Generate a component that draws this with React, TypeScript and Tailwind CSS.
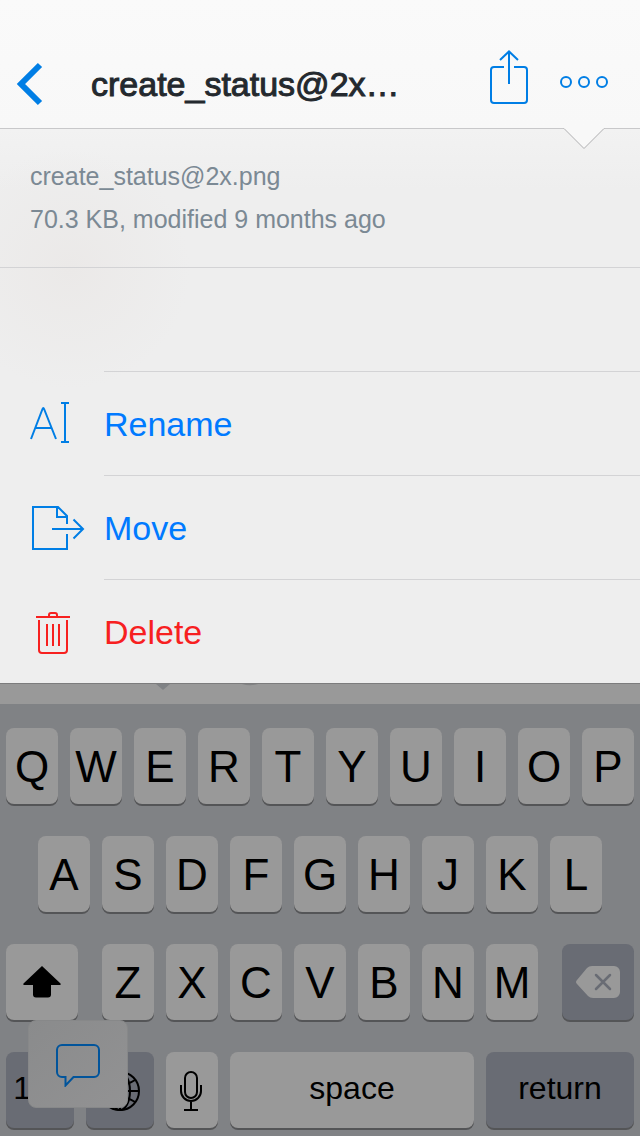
import type { ReactNode } from "react";

const title = "create_status@2x…";

function BackIcon() {
  return (
    <svg width="28" height="44" viewBox="0 0 28 44" fill="none" stroke="#007ee5" strokeWidth="6" aria-hidden="true">
      <path d="M24 3 5 22 24 41" />
    </svg>
  );
}

function ShareIcon() {
  return (
    <svg width="40" height="56" viewBox="0 0 40 56" fill="none" stroke="#007ee5" strokeWidth="2" aria-hidden="true">
      <path d="M15 17H5a3 3 0 0 0-3 3v30a3 3 0 0 0 3 3h30a3 3 0 0 0 3-3V20a3 3 0 0 0-3-3H25" />
      <path d="M20 34V1.500M11 10l9-8.500 9 8.500" />
    </svg>
  );
}

function MoreIcon() {
  return (
    <svg width="50" height="14" viewBox="0 0 50 14" fill="none" stroke="#007ee5" strokeWidth="2" aria-hidden="true">
      <circle cx="7" cy="7" r="5" />
      <circle cx="25" cy="7" r="5" />
      <circle cx="43" cy="7" r="5" />
    </svg>
  );
}

function RenameIcon() {
  return (
    <svg width="56" height="48" viewBox="0 0 56 48" fill="none" stroke="#007ee5" strokeWidth="2" aria-hidden="true">
      <path d="M1 39 12.500 9q.8-2 1.600 0L26 39M5.500 28H21.500" />
      <path d="M31 3h8M31 42h8M35 3v39" />
    </svg>
  );
}

function MoveIcon() {
  return (
    <svg width="56" height="48" viewBox="0 0 56 48" fill="none" stroke="#007ee5" strokeWidth="2" aria-hidden="true">
      <path d="M37 20V12L28 3H3v42h34V30M27 3v10h10" />
      <path d="M22 25h31M43.500 15.500 53 25l-9.500 9.500" />
    </svg>
  );
}

function TrashIcon() {
  return (
    <svg width="56" height="48" viewBox="0 0 56 48" fill="none" stroke="#f7201f" strokeWidth="2" aria-hidden="true">
      <path d="M6 9h34M19 9V7a2 2 0 0 1 2-2h4a2 2 0 0 1 2 2v2" />
      <path d="M9 12v30a3 3 0 0 0 3 3h22a3 3 0 0 0 3-3V12M17 16v22M23 16v22M29 16v22" />
    </svg>
  );
}

function ShiftIcon() {
  return (
    <svg width="38" height="32" viewBox="0 0 38 32" aria-hidden="true">
      <path d="M19 0 37.500 17.500q1 1.500-1 1.500H28v9.500a3 3 0 0 1-3 3H13a3 3 0 0 1-3-3V19H1.500q-2 0-1-1.500Z" />
    </svg>
  );
}

function DeleteIcon() {
  return (
    <svg width="44" height="32" viewBox="0 0 44 32" aria-hidden="true">
      <path d="M16 0h22a6 6 0 0 1 6 6v20a6 6 0 0 1-6 6H17q-3 0-5-2L1 18q-2-2 0-4L11 2q2-2 5-2Z" fill="#999" />
      <path d="m20 9 14 14M34 9 20 23" stroke="#696c74" strokeWidth="2.500" strokeLinecap="round" />
    </svg>
  );
}

function GlobeIcon() {
  return (
    <svg width="42" height="44" viewBox="0 0 42 44" fill="none" stroke="#000" strokeWidth="2" aria-hidden="true">
      <circle cx="21" cy="23" r="19" />
      <ellipse cx="21" cy="23" rx="10" ry="19" />
      <path d="M21 4v38M2 23h38M6 12q15 10 30 0M6 34q15-10 30 0" />
    </svg>
  );
}

function MicIcon() {
  return (
    <svg width="24" height="42" viewBox="0 0 24 42" fill="none" stroke="#000" strokeWidth="2" aria-hidden="true">
      <rect x="5" y="3" width="12" height="26" rx="6" />
      <path d="M1 16v6a10 10 0 0 0 20 0v-6M11 32v9M4 41h14" />
    </svg>
  );
}

function ChatIcon() {
  return (
    <svg width="46" height="46" viewBox="0 0 46 46" fill="none" stroke="#01549b" strokeWidth="2" aria-hidden="true">
      <path d="M7 4h32a5 5 0 0 1 5 5v22a5 5 0 0 1-5 5H18.500L10.500 44.500V36H7a5 5 0 0 1-5-5V9a5 5 0 0 1 5-5Z" />
    </svg>
  );
}

function Action({ icon, label, danger = false, last = false }: { icon: ReactNode; label: string; danger?: boolean; last?: boolean }) {
  return (
    <li>
      <button
        type="button"
        className={`flex w-full items-center gap-[18px] pl-[30px] text-left ${last ? "h-[103px]" : "h-[104px]"}`}
      >
        <span className="w-14 shrink-0">{icon}</span>
        <span
          className={`flex h-full flex-1 items-center text-[34px] leading-10 ${danger ? "text-[#f7201f]" : "text-[#007aff]"} ${last ? "" : "border-b border-[#d3d3d5]"}`}
        >
          {label}
        </span>
      </button>
    </li>
  );
}

function Key({ children, dark = false, small = false, label }: { children: ReactNode; dark?: boolean; small?: boolean; label?: string }) {
  return (
    <button
      type="button"
      aria-label={label}
      className={`flex h-[76px] min-w-0 flex-1 items-center justify-center rounded-lg shadow-[0_2px_0_#545557] ${dark ? "bg-[#696c74]" : "bg-[#999999]"} ${small ? "pb-1 text-[32px]" : "text-[44px]"} leading-none text-black`}
    >
      {children}
    </button>
  );
}

function Letters({ keys }: { keys: string }) {
  return (
    <div className="flex gap-3">
      {keys.split("").map((k) => (
        <Key key={k}>
          <span className="pt-0.5">{k}</span>
        </Key>
      ))}
    </div>
  );
}

export default function App() {
  return (
    <div className="flex min-h-screen flex-col bg-[#808285] font-['Liberation_Sans',Arial,sans-serif]">
      <header className="relative flex h-[129px] items-center border-b border-[#c8c8ca] bg-linear-to-b from-[#fafafa] to-[#f8f8f8] pt-[40px] pr-[31px] pl-4">
        <button type="button" aria-label="Back" className="w-[75px] shrink-0">
          <BackIcon />
        </button>
        <h1 className="min-w-0 flex-1 truncate text-[34px] leading-10 text-[#24292e] [-webkit-text-stroke:1px_#24292e]">{title}</h1>
        <div className="flex shrink-0 items-center gap-[30px]">
          <button type="button" aria-label="Share" className="pb-3">
            <ShareIcon />
          </button>
          <button type="button" aria-label="More" className="pb-1">
            <MoreIcon />
          </button>
        </div>
        <svg className="absolute top-[127px] right-[35px]" width="42" height="23" viewBox="0 0 42 23" aria-hidden="true">
          <path d="M1 0v1.500l20 20 20-20V0Z" fill="#f8f8f8" />
          <path d="m1 1.500 20 20 20-20" fill="none" stroke="#b0b0b2" />
        </svg>
      </header>

      <main className="border-b border-[#7c7c7d] bg-[#eeeeee] bg-[radial-gradient(circle_at_70px_140px,#ebe9e8_0,#eeeeee00_120px),linear-gradient(to_bottom,#f2f2f2,#eeeeee_60px)]">
        <section className="border-b border-[#d3d3d5] px-[30px] pt-[26px] pb-[26px] text-[25px] leading-[43px] text-[#7b8994]">
          <p>create_status@2x.png</p>
          <p>70.3 KB, modified 9 months ago</p>
        </section>
        <div className="ml-[104px] h-[104px] border-b border-[#d3d3d5]" />
        <ul>
          <Action icon={<RenameIcon />} label="Rename" />
          <Action icon={<MoveIcon />} label="Move" />
          <Action icon={<TrashIcon />} label="Delete" danger last />
        </ul>
      </main>

      <div className="h-5 bg-[#999999]">
        <svg width="360" height="8" viewBox="0 0 360 8" aria-hidden="true">
          <path d="M156 0h14l-7 6Z" fill="#808285" />
          <path d="M242 0h16q-8 2.500-16 0Z" fill="#818283" />
        </svg>
      </div>

      <section aria-label="Keyboard" className="relative flex flex-1 flex-col gap-8 px-[6px] pt-6 pb-2">
        <Letters keys="QWERTYUIOP" />
        <div className="px-8">
          <Letters keys="ASDFGHJKL" />
        </div>
        <div className="grid grid-cols-[72fr_436fr_72fr] gap-6">
          <Key label="Shift">
            <ShiftIcon />
          </Key>
          <Letters keys="ZXCVBNM" />
          <Key dark label="Delete backward">
            <DeleteIcon />
          </Key>
        </div>
        <div className="grid grid-cols-[68fr_68fr_52fr_244fr_148fr] gap-3">
          <Key dark small>
            123
          </Key>
          <Key dark label="Next keyboard">
            <GlobeIcon />
          </Key>
          <Key label="Dictate">
            <MicIcon />
          </Key>
          <Key small>space</Key>
          <Key dark small>
            return
          </Key>
        </div>
        <button
          type="button"
          aria-label="Comments"
          className="absolute bottom-7 left-7 flex h-[88px] w-[100px] items-center justify-center rounded-lg border border-[#878889] bg-linear-to-br from-[#8a8b8c] to-[#929293]"
        >
          <ChatIcon />
        </button>
      </section>
    </div>
  );
}
